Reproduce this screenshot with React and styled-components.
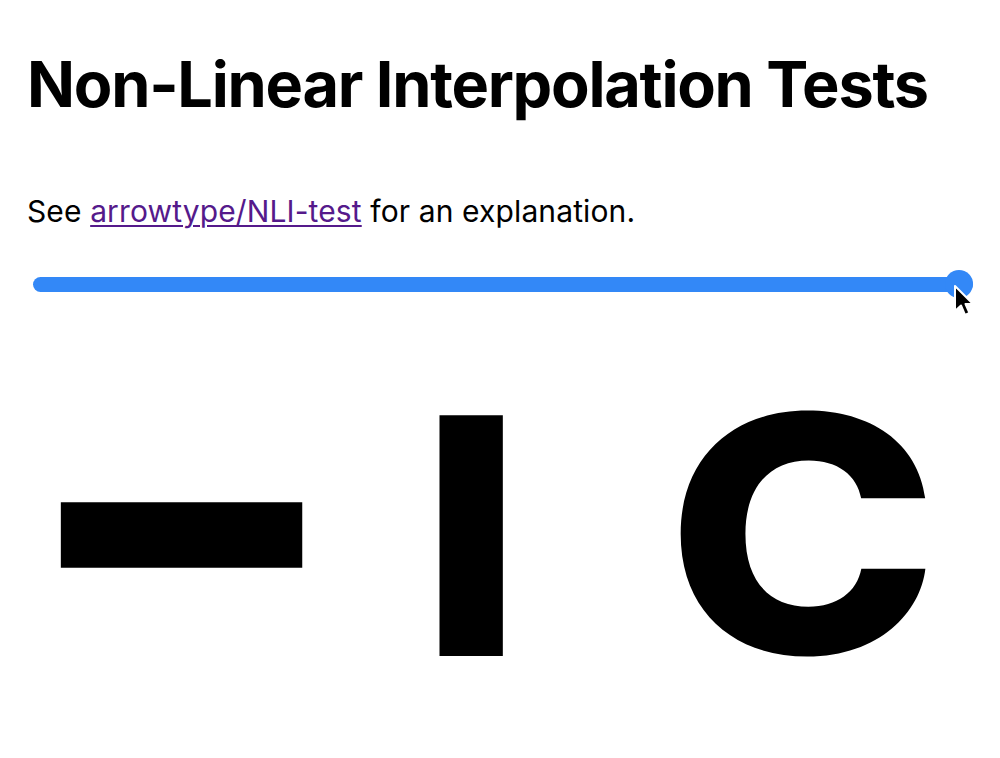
import React from "react";
import styled, { createGlobalStyle } from "styled-components";

const GlobalStyle = createGlobalStyle`
  html, body {
    margin: 0;
    padding: 0;
    background: #ffffff;
  }
  body {
    font-family: Inter, "Liberation Sans", sans-serif;
    color: #000000;
  }
`;

const Page = styled.div`
  display: flex;
  flex-direction: column;
  padding: 0 27px;
  width: 1000px;
  height: 758px;
  box-sizing: border-box;
  overflow: hidden;
`;

const Title = styled.h1`
  margin: 53px 0 0 0;
  font-size: 63px;
  line-height: 1;
  font-weight: 700;
  letter-spacing: -1.25px;
  white-space: nowrap;
`;

const Intro = styled.p`
  margin: 80px 0 0 0;
  font-size: 30px;
  line-height: 1;
  font-weight: 400;
  letter-spacing: 0.12px;
  white-space: nowrap;
`;

const Link = styled.a`
  color: #551a8b;
  text-decoration: underline;
  text-underline-offset: 3px;
  text-decoration-thickness: 2px;
`;

const SliderWrap = styled.div`
  position: relative;
  margin: 44px 0 0 6px;
  width: 940px;
  height: 28px;
`;

const Range = styled.input`
  -webkit-appearance: none;
  appearance: none;
  display: block;
  margin: 0;
  width: 100%;
  height: 28px;
  background: transparent;

  &::-webkit-slider-runnable-track {
    height: 15px;
    border-radius: 8px;
    background: #3388f7;
  }
  &::-webkit-slider-thumb {
    -webkit-appearance: none;
    width: 28px;
    height: 28px;
    margin-top: -6.5px;
    border-radius: 50%;
    background: #3388f7;
    border: none;
  }
`;

const Cursor = styled.svg`
  position: absolute;
  left: 920px;
  top: 14px;
  width: 24px;
  height: 36px;
  pointer-events: none;
`;

const GlyphRow = styled.div`
  display: grid;
  grid-template-columns: 309px 270px 395px;
  align-items: center;
  height: 300px;
  margin-top: 88px;
`;

const GlyphCell = styled.div`
  display: flex;
  justify-content: center;
  align-items: center;
  height: 100%;
`;

const Glyph = styled.span`
  display: block;
  font-family: Inter, "Liberation Sans", sans-serif;
  font-weight: ${(p) => p.$weight};
  font-size: 331px;
  line-height: 1;
  transform: ${(p) => p.$transform};
`;

const glyphs = [
  { ch: "-", weight: 900, transform: "translateY(-49.5px) scale(2.14, 1.34)" },
  { ch: "I", weight: 900, transform: "translateY(-16px) scaleX(0.97)" },
  { ch: "C", weight: 800, transform: "translate(-0.5px, -18px) scale(1.11, 0.995)" },
];

export default function App() {
  return (
    <>
      <GlobalStyle />
      <Page>
        <Title>Non-Linear Interpolation Tests</Title>
        <Intro>
          See <Link href="#">arrowtype/NLI-test</Link> for an explanation.
        </Intro>
        <SliderWrap>
          <Range type="range" min="0" max="100" defaultValue="100" readOnly />
          <Cursor viewBox="0 0 24 36">
            <path
              d="M2 2 L2 27 L8 21.5 L12 31 L16.5 29 L12.5 20 L20 20 Z"
              fill="#000"
              stroke="#fff"
              strokeWidth="2"
              strokeLinejoin="round"
            />
          </Cursor>
        </SliderWrap>
        <GlyphRow>
          {glyphs.map((g) => (
            <GlyphCell key={g.ch}>
              <Glyph $weight={g.weight} $transform={g.transform}>
                {g.ch}
              </Glyph>
            </GlyphCell>
          ))}
        </GlyphRow>
      </Page>
    </>
  );
}
